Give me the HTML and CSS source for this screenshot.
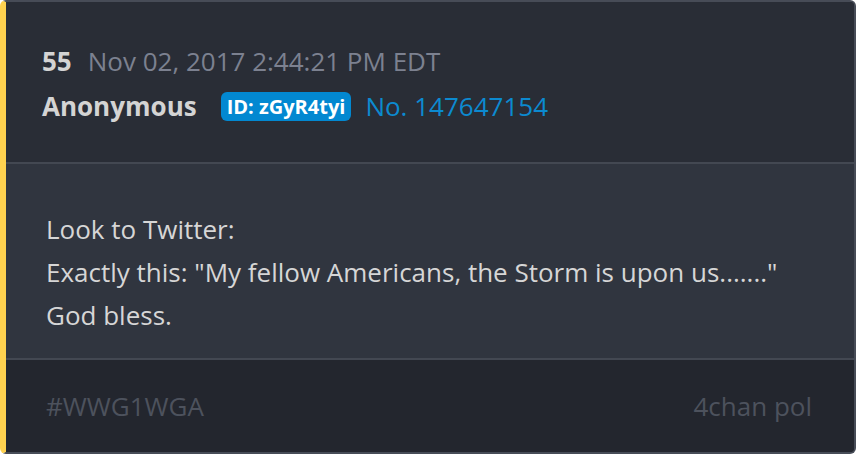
FILE: index.html
```html
<!DOCTYPE html>
<html>
<head>
<meta charset="utf-8">
<link rel="stylesheet" href="styles.css">
</head>
<body>
<div class="card">
  <div class="head">
    <div class="row"><span class="num">55</span><span class="date">Nov 02, 2017 2:44:21 PM EDT</span></div>
    <div class="row row2"><span class="name">Anonymous</span><span class="badge">ID: zGyR4tyi</span><span class="postno">No. 147647154</span></div>
  </div>
  <div class="body">
    <div>Look to Twitter:</div>
    <div>Exactly this: "My fellow Americans, the Storm is upon us......."</div>
    <div>God bless.</div>
  </div>
  <div class="foot">
    <span>#WWG1WGA</span>
    <span>4chan pol</span>
  </div>
</div>
</body>
</html>
```
FILE: styles.css
```css
html, body {
  margin: 0;
  padding: 0;
  background: #ffffff;
}
body {
  font-family: "Open Sans", "DejaVu Sans", sans-serif;
  font-size: 26px;
  line-height: 43px;
}
.card {
  box-sizing: border-box;
  width: 856px;
  height: 454px;
  display: flex;
  flex-direction: column;
  border: 2px solid #474c57;
  border-left: 6px solid #ffd24f;
  border-radius: 6px;
  overflow: hidden;
  background: #23262e;
}
.head {
  background: #292d36;
  padding: 38px 30px 0 36px;
  height: 162px;
  box-sizing: border-box;
  border-bottom: 2px solid #434852;
  flex-shrink: 0;
}
.row {
  display: flex;
  align-items: center;
  white-space: nowrap;
}
.row2 {
  margin-top: 2px;
}
.num {
  font-weight: 700;
  color: #d4d4d4;
  margin-right: 16px;
}
.date {
  color: #7c8190;
}
.name {
  font-weight: 700;
  color: #d4d4d4;
  margin-right: 24px;
}
.badge {
  background: #0288d1;
  color: #ffffff;
  font-weight: 700;
  font-size: 20px;
  line-height: 25px;
  padding: 2px 6px;
  border-radius: 6px;
  margin-right: 14px;
}
.postno {
  color: #0c8ad0;
}
.body {
  background: #30353f;
  color: #d6d6d6;
  padding: 44px 30px 0 40px;
  height: 196px;
  box-sizing: border-box;
  border-bottom: 2px solid #434852;
  flex-shrink: 0;
}
.foot {
  flex: 1;
  background: #23262e;
  color: #4d525d;
  display: flex;
  justify-content: space-between;
  padding: 25px 42px 0 40px;
}
```
